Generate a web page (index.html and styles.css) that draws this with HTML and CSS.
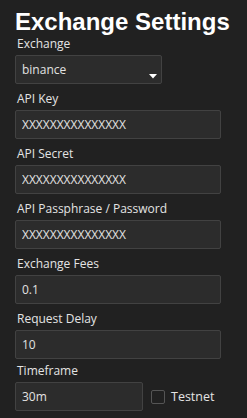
FILE: index.html
```html
<!DOCTYPE html>
<html lang="en">
<head>
    <meta charset="UTF-8" />
    <meta name="viewport" content="width=device-width, initial-scale=1.0"/>
    <title>Exchange Settings</title>
    <link rel="stylesheet" href="styles.css">
</head>
<body>
    <div class="settings">
        <h1 class="title">Exchange Settings</h1>

        <div class="field">
            <label for="exchange">Exchange</label>
            <div class="select-wrap">
                <select id="exchange" class="select">
                    <option>binance</option>
                    <option>kucoin</option>
                    <option>bybit</option>
                </select>
                <svg class="arrow" width="8" height="5" viewBox="0 0 8 5"><path d="M0 0H8L4 4.5Z" fill="#fff"/></svg>
            </div>
        </div>

        <div class="field">
            <label for="api-key">API Key</label>
            <input type="text" id="api-key" class="input" value="XXXXXXXXXXXXXXX" />
        </div>

        <div class="field">
            <label for="api-secret">API Secret</label>
            <input type="text" id="api-secret" class="input" value="XXXXXXXXXXXXXXX" />
        </div>

        <div class="field">
            <label for="api-pass">API Passphrase / Password</label>
            <input type="text" id="api-pass" class="input" value="XXXXXXXXXXXXXXX" />
        </div>

        <div class="field">
            <label for="fees">Exchange Fees</label>
            <input type="text" id="fees" class="input" value="0.1" />
        </div>

        <div class="field">
            <label for="delay">Request Delay</label>
            <input type="text" id="delay" class="input" value="10" />
        </div>

        <div class="field last">
            <label for="timeframe">Timeframe</label>
            <div class="row">
                <input type="text" id="timeframe" class="input short" value="30m" />
                <label class="check">
                    <input type="checkbox" class="checkbox" />
                    <span>Testnet</span>
                </label>
            </div>
        </div>
    </div>
</body>
</html>
```

FILE: styles.css
```css
body {
    margin: 0;
    padding: 8px 15px;
    background: #212121;
    color: #e4e4e4;
    font-family: 'Open Sans', 'Noto Sans', sans-serif;
    font-size: 12px;
    overflow: hidden;
}

.title {
    margin: 0;
    font-family: 'Liberation Sans', Arial, sans-serif;
    font-size: 24px;
    line-height: 27px;
    font-weight: 700;
    color: #fff;
}

.field {
    display: flex;
    flex-direction: column;
    margin-bottom: 6px;
}

.field.last {
    margin-top: -3px;
}

.field label {
    display: block;
    line-height: 17px;
    margin-bottom: 3px;
    padding-left: 2px;
}

.select-wrap {
    position: relative;
    width: 147px;
}

.select,
.input {
    box-sizing: border-box;
    height: 29px;
    margin: 0;
    padding: 0 6px;
    border: 1px solid #424242;
    border-radius: 2px;
    background: #2c2c2c;
    color: #e2e2e2;
    font-family: inherit;
    font-size: 12px;
    outline: none;
}

.select {
    width: 100%;
    appearance: none;
    -webkit-appearance: none;
}

.arrow {
    position: absolute;
    right: 5px;
    bottom: 5px;
}

.input {
    width: 206px;
}

.input.short {
    width: 128px;
}

.row {
    display: flex;
    align-items: center;
}

.field .check {
    display: flex;
    align-items: center;
    margin: 0 0 0 8px;
    padding-left: 0;
    gap: 6px;
    font-size: 12.5px;
}

.checkbox {
    appearance: none;
    -webkit-appearance: none;
    width: 14px;
    height: 14px;
    margin: 0;
    border: 1px solid #555;
    border-radius: 2px;
    background: transparent;
}
```
